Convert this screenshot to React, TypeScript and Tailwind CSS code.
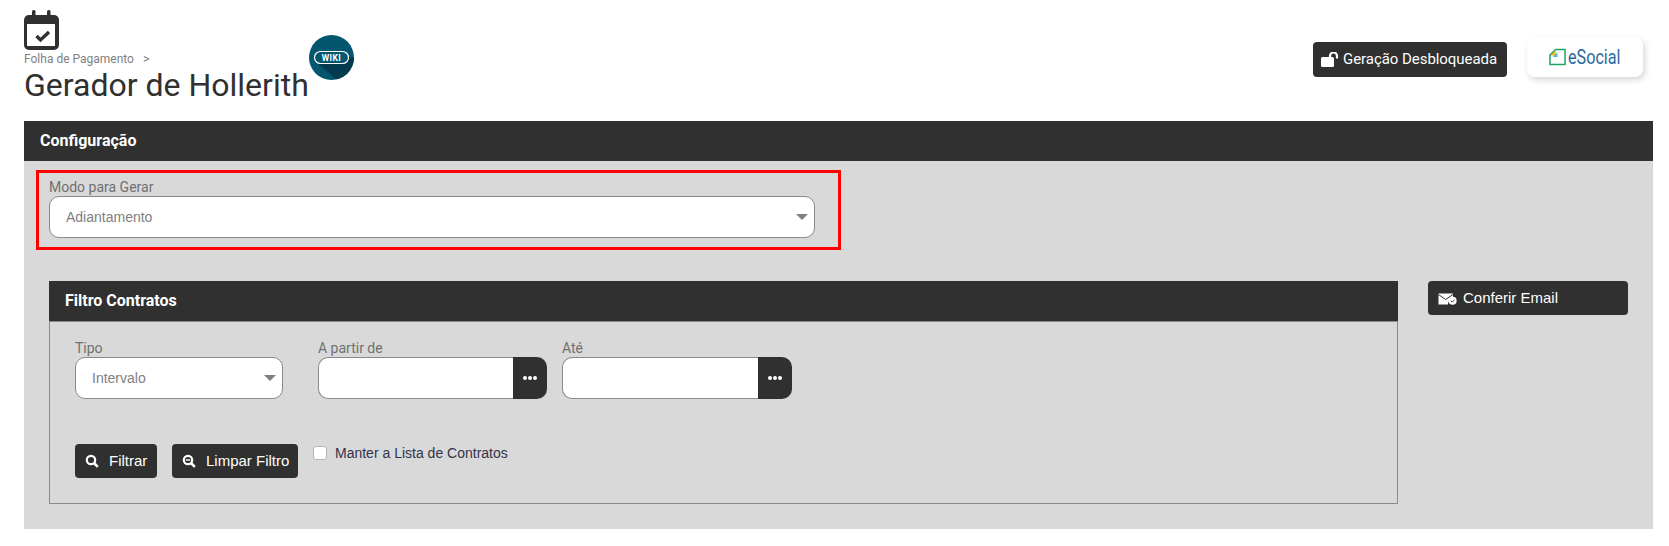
const roboto = "font-['Roboto',sans-serif]";

function CalendarCheck() {
  return (
    <svg width="35" height="40" viewBox="0 0 35 40" className="block">
      <rect x="8" y="0" width="3.5" height="7" rx="1.5" fill="#303030" />
      <rect x="23" y="0" width="3.5" height="7" rx="1.5" fill="#303030" />
      <rect x="0" y="5" width="35" height="35" rx="5" fill="#303030" />
      <rect x="3" y="14" width="28" height="22" fill="#fff" />
      <path d="M12.5 26l4 4 8.5-8" fill="none" stroke="#303030" strokeWidth="3.4" />
    </svg>
  );
}

function Wiki() {
  return (
    <svg width="45" height="45" viewBox="0 0 45 45" className="block">
      <defs>
        <clipPath id="wc"><circle cx="22.5" cy="22.5" r="22.5" /></clipPath>
      </defs>
      <circle cx="22.5" cy="22.5" r="22.5" fill="#04566f" />
      <path d="M6 26L36 22H45V45H28Z" fill="#043a4d" clipPath="url(#wc)" />
      <rect x="5.5" y="16.5" width="34" height="12" rx="6" fill="#04566f" stroke="#fff" strokeWidth="1.2" />
      <text x="22.5" y="26" textAnchor="middle" fontFamily="Roboto, sans-serif" fontWeight="700" fontSize="8.5" fill="#fff" letterSpacing="0.4">WIKI</text>
    </svg>
  );
}

function Lock() {
  return (
    <svg width="18" height="15" viewBox="0 0 18 15" className="block">
      <rect x="0" y="5" width="13" height="10" rx="1.5" fill="#fff" />
      <path d="M9 5.5V4a3.5 3.5 0 0 1 7 0V6.5" fill="none" stroke="#fff" strokeWidth="2.2" />
    </svg>
  );
}

function Search({ minus = false }: { minus?: boolean }) {
  return (
    <svg width="14" height="14" viewBox="0 0 14 14" className="block">
      <circle cx="6" cy="6" r="4.2" fill="none" stroke="#fff" strokeWidth="2.2" />
      <path d="M9 9l3.8 3.8" stroke="#fff" strokeWidth="2.6" />
      {minus && <path d="M3.8 6h4.4" stroke="#fff" strokeWidth="1.4" />}
    </svg>
  );
}

function MailCheck() {
  return (
    <svg width="19" height="12" viewBox="0 0 19 12" className="block">
      <path d="M0.5 0.5H15V6.5A4.5 4.5 0 0 0 10 11.5H0.5Z" fill="#fff" />
      <path d="M0.5 1.5L7.7 6.5 15 1.5" fill="none" stroke="#303030" strokeWidth="1" />
      <circle cx="14.6" cy="7.8" r="4" fill="#fff" />
      <path d="M12.8 7.8l1.4 1.4 2.3-2.5" fill="none" stroke="#303030" strokeWidth="0.9" />
    </svg>
  );
}

function Select({ value, className }: { value: string; className: string }) {
  return (
    <div className={`flex h-[42px] items-center justify-between rounded-[10px] border border-[#8a8a8a] bg-white pl-[16px] pr-[6px] font-['Liberation_Sans',sans-serif] text-[14px] text-[#808080] ${className}`}>
      <span>{value}</span>
      <span className="h-0 w-0 border-x-[6px] border-t-[6px] border-x-transparent border-t-[#808080]" />
    </div>
  );
}

function Label({ children }: { children: string }) {
  return <div className={`h-[17px] text-[14px] leading-[17px] text-[#707070] ${roboto}`}>{children}</div>;
}

function DateField({ label, className }: { label: string; className: string }) {
  return (
    <div className={className}>
      <Label>{label}</Label>
      <div className="flex h-[42px]">
        <div className="flex-1 rounded-l-[10px] border border-r-0 border-[#8a8a8a] bg-white" />
        <div className="flex w-[34px] items-center justify-center gap-[1.5px] rounded-r-[10px] bg-[#303030]">
          <span className="h-[3.5px] w-[3.5px] rounded-full bg-white" />
          <span className="h-[3.5px] w-[3.5px] rounded-full bg-white" />
          <span className="h-[3.5px] w-[3.5px] rounded-full bg-white" />
        </div>
      </div>
    </div>
  );
}

function ActionButton({ icon, label, className }: { icon: React.ReactNode; label: string; className: string }) {
  return (
    <button className={`flex h-[34px] items-center rounded-[4px] bg-[#303030] font-['Liberation_Sans',sans-serif] text-[15px] text-white ${className}`}>
      {icon}
      <span>{label}</span>
    </button>
  );
}

export default function App() {
  return (
    <div className="h-[546px] w-[1669px] overflow-hidden bg-white pl-[24px] pr-[16px] pt-[10px] text-[#303030]">
      <header className="flex h-[111px] items-start">
        <div className="w-[285px]">
          <CalendarCheck />
          <div className={`mt-[2px] flex h-[14px] items-center gap-[9px] text-[12px] leading-[14px] text-[#808080] ${roboto}`}>
            <span>Folha de Pagamento</span>
            <span className="text-[13px]">&gt;</span>
          </div>
          <h1 className={`mt-[1px] whitespace-nowrap text-[32px] leading-[36px] font-normal text-[#303030] ${roboto}`}>Gerador de Hollerith</h1>
        </div>
        <div className="mt-[25px]">
          <Wiki />
        </div>
        <div className="ml-auto mr-[10px] flex items-start gap-[20px] pt-[27px]">
          <div className={`mt-[5px] flex h-[35px] w-[194px] items-center gap-[4px] rounded-[4px] bg-[#303030] pl-[8px] text-[15px] tracking-[-0.05px] text-white ${roboto}`}>
            <Lock />
            <span className="whitespace-nowrap">Geração Desbloqueada</span>
          </div>
          <div className="flex h-[40px] w-[116px] items-center justify-center rounded-[8px] bg-white shadow-[2px_3px_6px_rgba(0,0,0,0.16)]">
            <svg width="17" height="18" viewBox="0 0 18 18" className="block">
              <path d="M1 17V7L7 1H17V17Z" fill="#fff" stroke="#1fa463" strokeWidth="1.6" />
              <path d="M1.5 7.5L7 2V7.5Z" fill="#f4b400" />
              <path d="M4 9H9V4Z" fill="#4fb4e8" />
            </svg>
            <span className={`ml-[2px] inline-block w-[54px] origin-left scale-x-[0.77] whitespace-nowrap text-[21px] font-normal leading-[24px] text-[#2a6a9e] ${roboto}`}>eSocial</span>
          </div>
        </div>
      </header>

      <section className="h-[408px] bg-[#d9d9d9]">
        <div className={`flex h-[40px] items-center bg-[#303030] pl-[16px] text-[16px] font-bold text-white ${roboto}`}>Configuração</div>

        <div className="ml-[12px] mt-[9px] h-[80px] w-[805px] border-[3px] border-[#ff0000] pl-[10px] pt-[6px]">
          <Label>Modo para Gerar</Label>
          <Select value="Adiantamento" className="w-[766px]" />
        </div>

        <div className="mt-[31px] flex items-start pl-[25px]">
          <div className="w-[1349px]">
            <div className={`flex h-[40px] items-center bg-[#303030] pl-[16px] text-[16px] font-bold text-white ${roboto}`}>Filtro Contratos</div>
            <div className="h-[183px] border border-[#8a8a8a] pl-[25px] pt-[18px]">
              <div className="flex items-start">
                <div className="w-[208px]">
                  <Label>Tipo</Label>
                  <Select value="Intervalo" className="w-[208px]" />
                </div>
                <DateField label="A partir de" className="ml-[35px] w-[229px]" />
                <DateField label="Até" className="ml-[15px] w-[230px]" />
              </div>
              <div className="mt-[45px] flex items-start">
                <ActionButton icon={<Search />} label="Filtrar" className="w-[82px] gap-[10px] pl-[10px]" />
                <ActionButton icon={<Search minus />} label="Limpar Filtro" className="ml-[15px] w-[126px] gap-[10px] pl-[10px]" />
                <div className="ml-[15px] mt-[2px] flex items-center gap-[8px]">
                  <span className="h-[14px] w-[14px] rounded-[3px] border border-[#b5b5b5] bg-white" />
                  <span className="font-['Liberation_Sans',sans-serif] text-[14px] leading-[14px] text-[#33334a]">Manter a Lista de Contratos</span>
                </div>
              </div>
            </div>
          </div>
          <ActionButton icon={<span className="mt-[4px] block"><MailCheck /></span>} label="Conferir Email" className="ml-[30px] w-[200px] !items-start gap-[6px] pl-[10px] pt-[8px] leading-[17px]" />
        </div>
      </section>
    </div>
  );
}
